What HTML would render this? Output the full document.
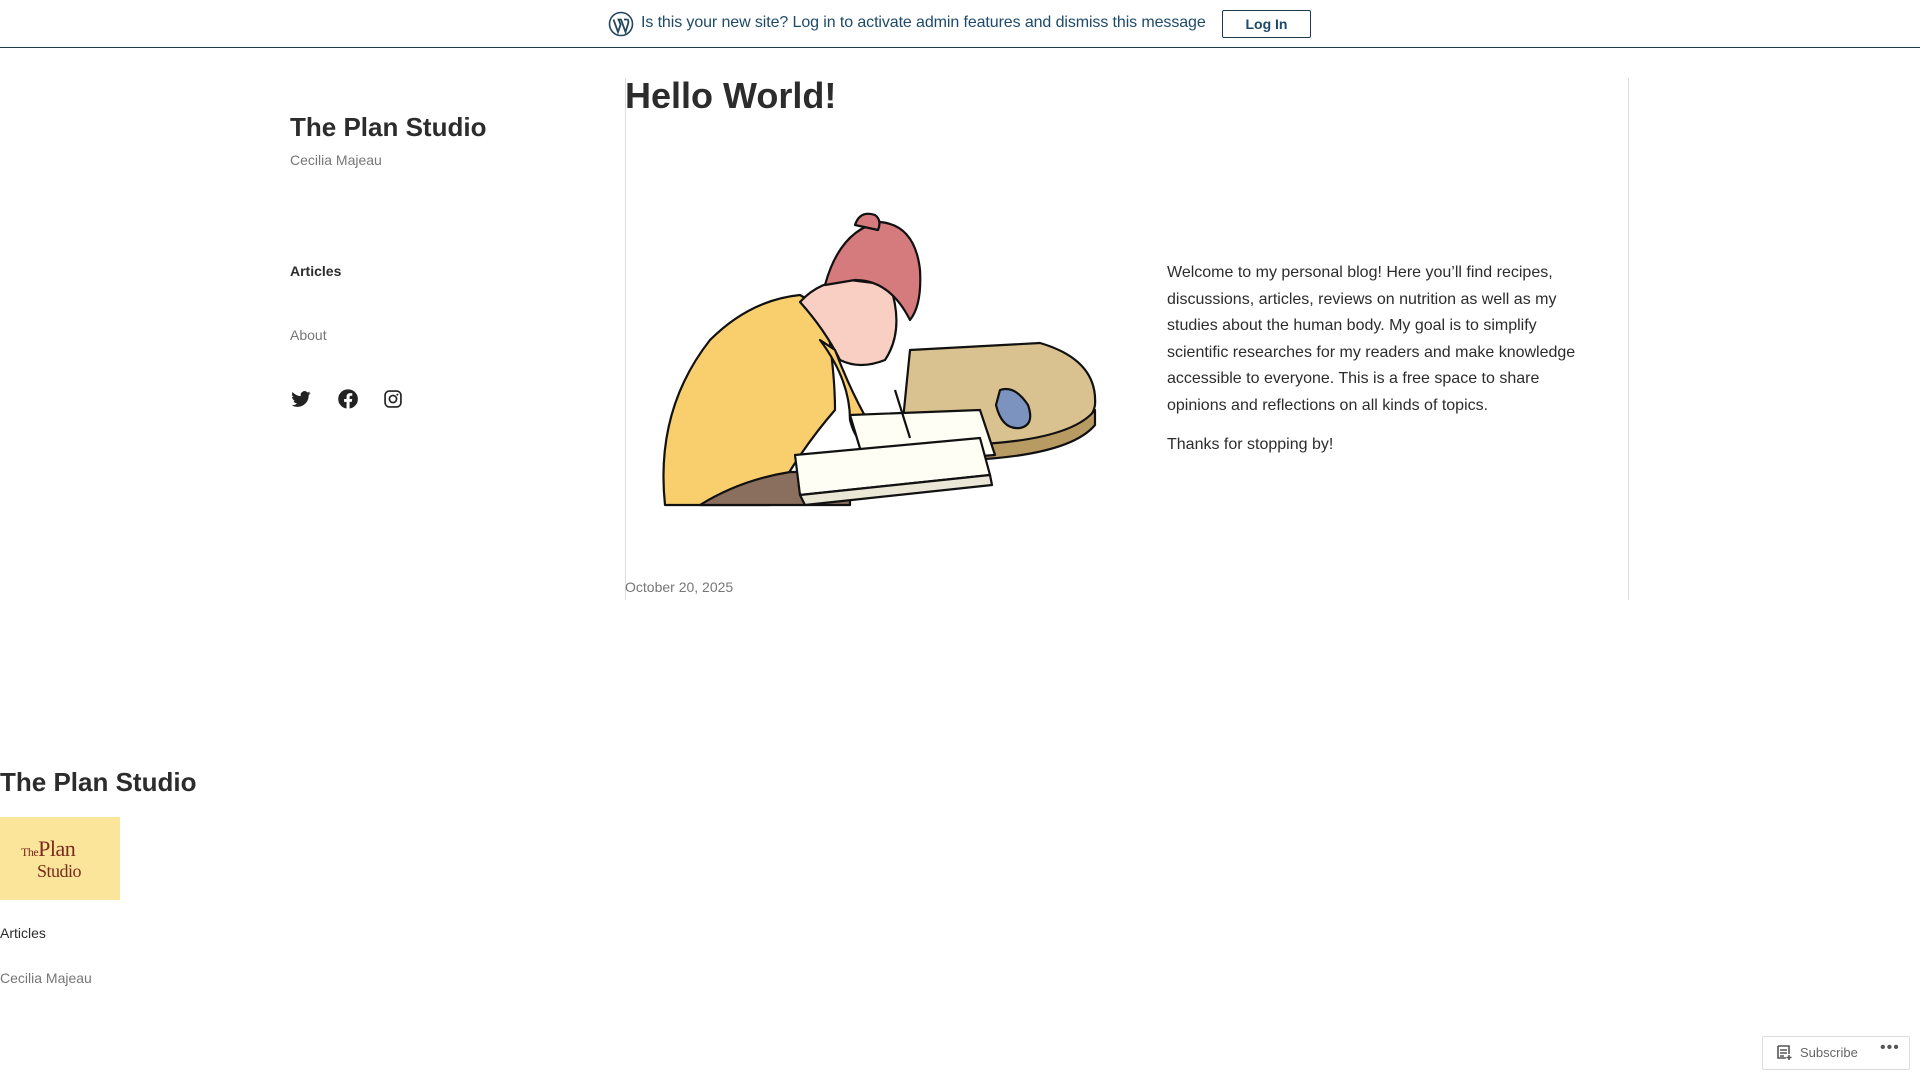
<!DOCTYPE html>
<html><head><meta charset="utf-8"><style>
*{margin:0;padding:0;box-sizing:border-box}
body{width:1920px;height:1080px;background:#fff;font-family:"Liberation Sans",sans-serif;color:#2c2c2c;position:relative;overflow:hidden}
.a{position:absolute;white-space:nowrap}
</style></head><body>
<div class="a" style="left:0;top:0;width:1920px;height:48px;border-bottom:1px solid #1d3b4f"></div>
<svg class="a" style="left:608px;top:11px" width="26" height="26" viewBox="0 0 26 26"><circle cx="13" cy="13" r="11.5" fill="none" stroke="#23465e" stroke-width="1.6"/><path d="M5.5 8.5 L10 21 L12.6 13.5 L10.6 8.5 M9.5 8.5h4 M13 8.5 L17.5 21 L20 13 Q21 10 19.5 8 M16 8.5h3" fill="none" stroke="#23465e" stroke-width="1.8"/></svg>
<div class="a" style="left:641px;top:14px;font-size:16px;letter-spacing:-0.1px;color:#1d4a6b">Is this your new site? Log in to activate admin features and dismiss this message</div>
<div class="a" style="left:1222px;top:10px;width:89px;height:28px;border:1px solid #1d3b4f;border-radius:2px;font-size:14px;font-weight:bold;color:#1d4a6b;text-align:center;line-height:26px">Log In</div>

<div class="a" style="left:290px;top:112px;font-size:26px;font-weight:bold">The Plan Studio</div>
<div class="a" style="left:290px;top:152px;font-size:14px;color:#777">Cecilia Majeau</div>
<div class="a" style="left:290px;top:263px;font-size:14px;font-weight:bold">Articles</div>
<div class="a" style="left:290px;top:327px;font-size:14px;color:#777">About</div>
<svg class="a" style="left:290px;top:388px" width="22" height="22" viewBox="0 0 24 24"><path fill="#222" d="M22.5 5.5c-.8.4-1.6.6-2.5.7.9-.5 1.6-1.4 1.9-2.4-.8.5-1.8.9-2.8 1.1a4.3 4.3 0 0 0-7.4 3.9C8.1 8.6 4.9 6.9 2.8 4.3c-1.2 2-.5 4.5 1.3 5.7-.7 0-1.4-.2-1.9-.5 0 2.1 1.5 3.9 3.5 4.3-.6.2-1.3.2-1.9.1.6 1.7 2.2 3 4.1 3A8.7 8.7 0 0 1 1.5 18.7 12.3 12.3 0 0 0 20.4 8.3v-.6c.8-.6 1.6-1.3 2.1-2.2z"/></svg>
<svg class="a" style="left:337px;top:388px" width="22" height="22" viewBox="0 0 24 24"><path fill="#222" d="M12 1.5a10.5 10.5 0 0 0-1.6 20.9v-7.3H7.7V12h2.7V9.7c0-2.6 1.6-4.1 4-4.1 1.1 0 2.3.2 2.3.2v2.6h-1.3c-1.3 0-1.7.8-1.7 1.7V12h2.9l-.5 3.1h-2.4v7.3A10.5 10.5 0 0 0 12 1.5z"/></svg>
<svg class="a" style="left:383px;top:389px" width="20" height="20" viewBox="0 0 24 24"><rect x="2.5" y="2.5" width="19" height="19" rx="5" fill="none" stroke="#222" stroke-width="2"/><circle cx="12" cy="12" r="4.3" fill="none" stroke="#222" stroke-width="2"/><circle cx="17.3" cy="6.7" r="1.2" fill="#222"/></svg>

<div class="a" style="left:625px;top:78px;width:1px;height:522px;background:#ddd"></div>
<div class="a" style="left:1628px;top:78px;width:1px;height:522px;background:#ddd"></div>
<div class="a" style="left:625px;top:75px;font-size:36px;font-weight:bold">Hello World!</div>

<svg class="a" style="left:650px;top:210px" width="450" height="300" viewBox="0 0 450 300">
<g stroke="#111" stroke-width="2.2" stroke-linejoin="round">
<path d="M390 133 Q448 150 445 195 Q440 230 330 240 L250 240 L260 140 Z" fill="#d9c28f"/>
<path d="M310 235 Q420 232 445 200 L445 215 Q420 245 320 250 Z" fill="#b89a63"/>
<path d="M15 295 Q5 200 60 130 Q100 90 150 85 L175 100 Q185 160 185 200 Q150 240 120 295 Z" fill="#f9cf6e"/>
<path d="M50 295 Q90 270 140 262 L200 262 L200 295 Z" fill="#8a6e5e"/>
<path d="M150 92 Q170 70 200 70 L240 75 Q255 120 235 150 Q210 160 190 150 Q175 120 150 92Z" fill="#f8cfc2"/>
<path d="M175 75 Q190 20 230 12 Q265 15 270 60 Q272 95 260 110 Q240 70 205 70 Z" fill="#d57a7d"/>
<path d="M205 15 Q210 0 225 5 Q232 10 228 20 Z" fill="#d57a7d"/>
<path d="M170 130 Q200 170 200 210 Q210 250 250 240 L280 230 L270 215 L220 215 Q200 180 185 140 Z" fill="#f9cf6e"/>
<path d="M205 218 Q230 200 250 215 L255 235 L220 240 Z" fill="#f8cfc2"/>
<path d="M200 205 L330 200 L345 245 L215 255 Z" fill="#fffef5"/>
<path d="M145 245 L330 228 L340 265 L150 285 Z" fill="#fffef5"/>
<path d="M150 285 L340 265 L342 275 L155 295 Z" fill="#ebe7d6"/>
<path d="M350 180 Q365 175 378 195 Q385 215 370 218 Q352 220 346 195 Z" fill="#7d93bf"/>
<path d="M260 228 L245 180" fill="none"/>
</g></svg>

<div class="a" style="left:1167px;top:260px;font-size:16px;line-height:26.5px;white-space:normal;width:420px">Welcome to my personal blog! Here you’ll find recipes, discussions, articles, reviews on nutrition as well as my studies about the human body. My goal is to simplify scientific researches for my readers and make knowledge accessible to everyone. This is a free space to share opinions and reflections on all kinds of topics.</div>
<div class="a" style="left:1167px;top:436px;font-size:16px">Thanks for stopping by!</div>
<div class="a" style="left:625px;top:579px;font-size:14px;color:#777">October 20, 2025</div>

<div class="a" style="left:0;top:767px;font-size:26px;font-weight:bold">The Plan Studio</div>
<div class="a" style="left:0;top:817px;width:120px;height:83px;background:#fbe59a"></div>
<div class="a" style="left:21px;top:839px;font-family:'Liberation Serif',serif;color:#7a2a1e;line-height:19px;letter-spacing:-0.5px"><span style="font-size:12px">The</span><span style="font-size:22px">Plan</span><br><span style="font-size:18px;margin-left:16px">Studio</span></div>
<div class="a" style="left:0;top:925px;font-size:14px">Articles</div>
<div class="a" style="left:0;top:970px;font-size:14px;color:#777">Cecilia Majeau</div>

<div class="a" style="left:1762px;top:1036px;width:148px;height:34px;border:1px solid #ddd;border-radius:2px;background:#fff"></div>
<svg class="a" style="left:1776px;top:1044px" width="17" height="17" viewBox="0 0 17 17"><path d="M2 2h11v8M2 2v12h8M4 6h7M4 9h7M4 12h4M13 11v5M10.5 13.5h5" fill="none" stroke="#555" stroke-width="1.6"/></svg>
<div class="a" style="left:1800px;top:1045px;font-size:13px;color:#666">Subscribe</div>
<div class="a" style="left:1880px;top:1039px;font-size:16px;color:#555;letter-spacing:1px">•••</div>
</body></html>
